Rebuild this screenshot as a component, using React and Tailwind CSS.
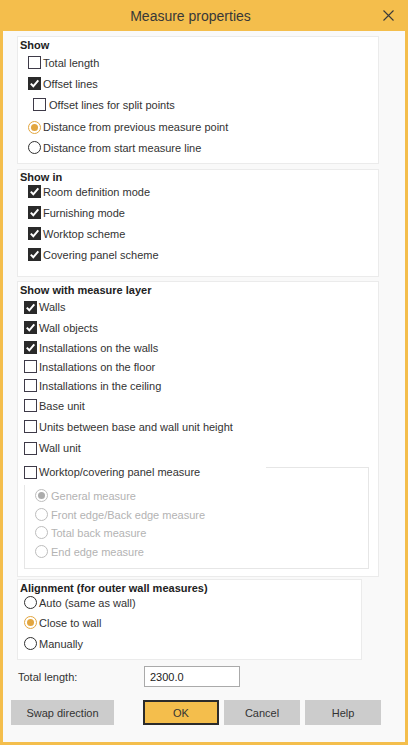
import React from "react";

const Check = ({ checked }) =>
  checked ? (
    <span className="w-[13px] h-[13px] bg-[#2a2a2a] flex items-center justify-center shrink-0">
      <svg width="11" height="11" viewBox="0 0 11 11">
        <path d="M1.8 5.6 L4.3 8.3 L9.3 2.3" fill="none" stroke="#ffffff" strokeWidth="2" />
      </svg>
    </span>
  ) : (
    <span className="w-[13px] h-[13px] border border-[#3e3a48] bg-white shrink-0" />
  );

const Radio = ({ checked, disabled }) => {
  if (disabled) {
    return (
      <span className="w-[13px] h-[13px] rounded-full border border-[#bdbdbd] bg-white flex items-center justify-center shrink-0">
        {checked && <span className="w-[7px] h-[7px] rounded-full bg-[#acacac]" />}
      </span>
    );
  }
  if (checked) {
    return (
      <span className="w-[13px] h-[13px] rounded-full border border-[#e2a640] bg-white flex items-center justify-center shrink-0">
        <span className="w-[7px] h-[7px] rounded-full bg-[#e2a640]" />
      </span>
    );
  }
  return <span className="w-[13px] h-[13px] rounded-full border border-[#2f2f2f] bg-white shrink-0" />;
};

const Label = ({ children, disabled }) => (
  <span className={disabled ? "text-[#b3b3b3]" : "text-[#333333]"}>{children}</span>
);

export default function App() {
  return (
    <div className="w-[408px] h-[745px] flex flex-col font-['Liberation_Sans',Arial,sans-serif] text-[11px] leading-[14px] text-[#333333]">
      {/* Title bar */}
      <div className="h-[31px] bg-[#f4be4c] flex items-center shrink-0">
        <div className="flex-1 text-center text-[14px] leading-[18px] text-[#383838]">Measure properties</div>
        <div className="w-[27px] pl-[2px] flex items-center">
          <svg width="11" height="11" viewBox="0 0 11 11">
            <path d="M0.5 0.5 L10.5 10.5 M10.5 0.5 L0.5 10.5" stroke="#3a3a3a" strokeWidth="1.1" fill="none" />
          </svg>
        </div>
      </div>

      {/* Body */}
      <div className="flex-1 bg-[#f9f9f9] border-x-[3px] border-b-[3px] border-[#f4be4c] flex flex-col pl-[8px] pt-[5px]">
        {/* Show */}
        <div className="ml-[6px] w-[362px] h-[128px] bg-white border border-[#ebebeb] flex flex-col pt-[1px]">
          <div className="h-[14px] pl-[2px] font-bold text-[#222222]">Show</div>
          <div className="h-[21px] flex items-center gap-[2px] pl-[10px]">
            <Check checked={false} />
            <Label>Total length</Label>
          </div>
          <div className="h-[21px] flex items-center gap-[2px] pl-[10px]">
            <Check checked={true} />
            <Label>Offset lines</Label>
          </div>
          <div className="h-[21px] flex items-center gap-[3px] pl-[15px]">
            <Check checked={false} />
            <Label>Offset lines for split points</Label>
          </div>
          <div className="h-[24px] flex items-center gap-[2px] pl-[10px]">
            <Radio checked={true} />
            <Label>Distance from previous measure point</Label>
          </div>
          <div className="h-[17px] flex items-center gap-[2px] pl-[10px]">
            <Radio checked={false} />
            <Label>Distance from start measure line</Label>
          </div>
        </div>

        {/* Show in */}
        <div className="ml-[6px] mt-[5px] w-[362px] h-[108px] bg-white border border-[#ebebeb] flex flex-col">
          <div className="h-[11px] pl-[2px] font-bold text-[#222222]">Show in</div>
          <div className="h-[21px] flex items-center gap-[2px] pl-[10px]">
            <Check checked={true} />
            <Label>Room definition mode</Label>
          </div>
          <div className="h-[21px] flex items-center gap-[2px] pl-[10px]">
            <Check checked={true} />
            <Label>Furnishing mode</Label>
          </div>
          <div className="h-[21px] flex items-center gap-[2px] pl-[10px]">
            <Check checked={true} />
            <Label>Worktop scheme</Label>
          </div>
          <div className="h-[21px] flex items-center gap-[2px] pl-[10px]">
            <Check checked={true} />
            <Label>Covering panel scheme</Label>
          </div>
        </div>

        {/* Show with measure layer */}
        <div className="ml-[6px] mt-[4px] w-[362px] h-[296px] bg-white border border-[#ebebeb] flex flex-col pt-[1px]">
          <div className="h-[14px] pl-[2px] font-bold text-[#222222]">Show with measure layer</div>
          <div className="h-[20px] flex items-center gap-[2px] pl-[6px]">
            <Check checked={true} />
            <Label>Walls</Label>
          </div>
          <div className="h-[21px] flex items-center gap-[2px] pl-[6px]">
            <Check checked={true} />
            <Label>Wall objects</Label>
          </div>
          <div className="h-[19px] flex items-center gap-[2px] pl-[6px]">
            <Check checked={true} />
            <Label>Installations on the walls</Label>
          </div>
          <div className="h-[19px] flex items-center gap-[2px] pl-[6px]">
            <Check checked={false} />
            <Label>Installations on the floor</Label>
          </div>
          <div className="h-[19px] flex items-center gap-[2px] pl-[6px]">
            <Check checked={false} />
            <Label>Installations in the ceiling</Label>
          </div>
          <div className="h-[21px] flex items-center gap-[2px] pl-[6px]">
            <Check checked={false} />
            <Label>Base unit</Label>
          </div>
          <div className="h-[21px] flex items-center gap-[2px] pl-[6px]">
            <Check checked={false} />
            <Label>Units between base and wall unit height</Label>
          </div>
          <div className="h-[22px] flex items-center gap-[2px] pl-[6px]">
            <Check checked={false} />
            <Label>Wall unit</Label>
          </div>

          {/* Worktop group with checkbox legend */}
          <div className="relative">
            <div className="ml-[6px] mt-[8px] w-[345px] h-[102px] border border-[#e6e6e6] flex flex-col pt-[18px] pl-[10px]">
              <div className="h-[19px] flex items-center gap-[3px]">
                <Radio checked={true} disabled />
                <Label disabled>General measure</Label>
              </div>
              <div className="h-[19px] flex items-center gap-[3px]">
                <Radio checked={false} disabled />
                <Label disabled>Front edge/Back edge measure</Label>
              </div>
              <div className="h-[17px] flex items-center gap-[3px]">
                <Radio checked={false} disabled />
                <Label disabled>Total back measure</Label>
              </div>
              <div className="h-[21px] flex items-center gap-[3px]">
                <Radio checked={false} disabled />
                <Label disabled>End edge measure</Label>
              </div>
            </div>
            <div className="absolute left-0 top-0 w-[248px] h-[26px] bg-white flex items-center gap-[2px] pl-[6px]">
              <Check checked={false} />
              <Label>Worktop/covering panel measure</Label>
            </div>
          </div>
        </div>

        {/* Alignment */}
        <div className="ml-[6px] mt-[2px] w-[345px] h-[81px] bg-white border border-[#ebebeb] flex flex-col pt-[1px]">
          <div className="h-[12px] pl-[2px] font-bold text-[#222222]">Alignment (for outer wall measures)</div>
          <div className="h-[19px] flex items-center gap-[2px] pl-[6px]">
            <Radio checked={false} />
            <Label>Auto (same as wall)</Label>
          </div>
          <div className="h-[21px] flex items-center gap-[2px] pl-[6px]">
            <Radio checked={true} />
            <Label>Close to wall</Label>
          </div>
          <div className="h-[21px] flex items-center gap-[2px] pl-[6px]">
            <Radio checked={false} />
            <Label>Manually</Label>
          </div>
        </div>

        {/* Total length */}
        <div className="ml-[6px] mt-[6px] h-[21px] flex items-center">
          <div className="w-[127px] pl-[1px] text-[#333333]">Total length:</div>
          <div className="w-[96px] h-[21px] border border-[#aaaaaa] bg-white flex items-center pl-[5px] text-[#222222]">
            2300.0
          </div>
        </div>

        {/* Buttons */}
        <div className="mt-[13px] flex items-center">
          <div className="w-[103px] h-[25px] bg-[#cccccc] flex items-center justify-center text-[#333333]">Swap direction</div>
          <div className="ml-[29px] w-[76px] h-[25px] bg-[#f4be4c] border-2 border-[#2b2b2b] flex items-center justify-center text-[#333333]">OK</div>
          <div className="ml-[5px] w-[76px] h-[25px] bg-[#cccccc] flex items-center justify-center text-[#333333]">Cancel</div>
          <div className="ml-[5px] w-[76px] h-[25px] bg-[#cccccc] flex items-center justify-center text-[#333333]">Help</div>
        </div>
      </div>
    </div>
  );
}
